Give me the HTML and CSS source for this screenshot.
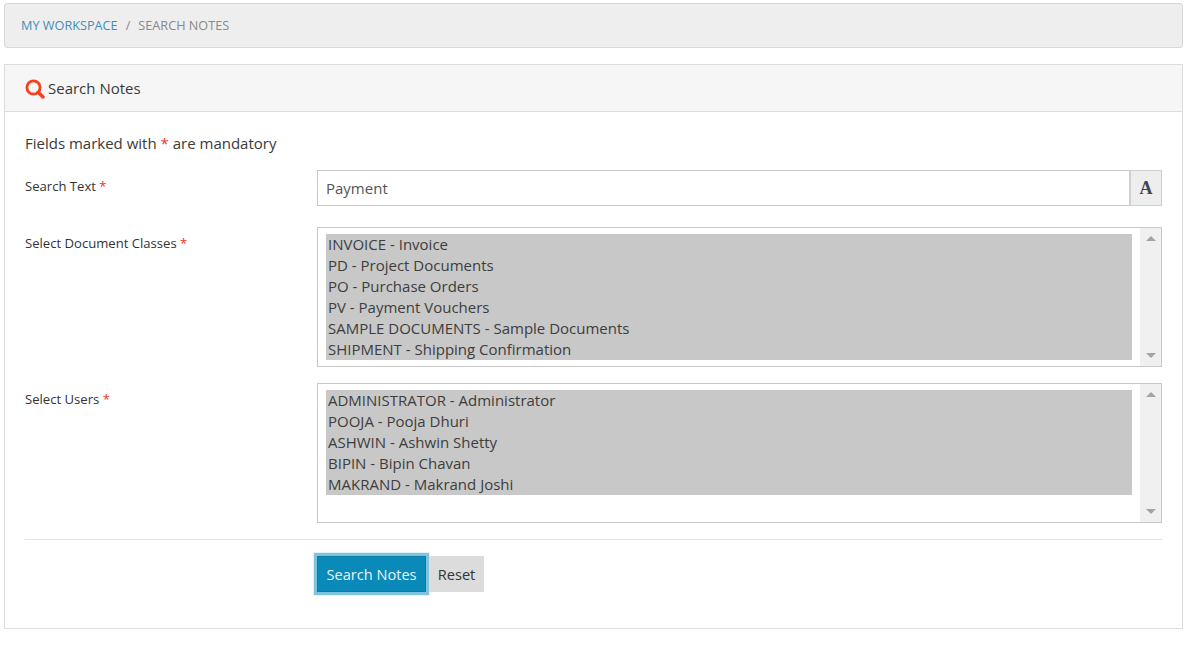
FILE: index.html
```html
<!DOCTYPE html>
<html lang="en">
<head>
<meta charset="utf-8">
<title>Search Notes</title>
<link rel="stylesheet" href="styles.css">
</head>
<body>
<nav class="crumbs"><a class="crumb-link">MY WORKSPACE</a><span class="crumb-sep">/</span><span class="crumb-cur">SEARCH NOTES</span></nav>
<section class="panel">
  <header class="panel-head">
    <svg class="head-icon" viewBox="0 0 20 20" width="20" height="20"><circle cx="8.5" cy="8.5" r="6.6" fill="none" stroke="#f0431f" stroke-width="2.8"/><path d="M13.2 13.2 L18 18" stroke="#f0431f" stroke-width="3.4" stroke-linecap="round"/></svg>
    <h1 class="panel-title">Search Notes</h1>
  </header>
  <div class="panel-body">
    <p class="note">Fields marked with <span class="req">*</span> are mandatory</p>
    <div class="row row-text">
      <label class="lbl">Search Text <span class="req">*</span></label>
      <div class="input-group">
        <div class="input">Payment</div>
        <div class="addon">A</div>
      </div>
    </div>
    <div class="row row-list">
      <label class="lbl">Select Document Classes <span class="req">*</span></label>
      <div class="listbox">
        <div class="opts">
          <div class="opt">INVOICE - Invoice</div>
          <div class="opt">PD - Project Documents</div>
          <div class="opt">PO - Purchase Orders</div>
          <div class="opt">PV - Payment Vouchers</div>
          <div class="opt">SAMPLE DOCUMENTS - Sample Documents</div>
          <div class="opt">SHIPMENT - Shipping Confirmation</div>
        </div>
        <div class="scroll"><span class="arrow up"></span><span class="arrow down"></span></div>
      </div>
    </div>
    <div class="row row-list">
      <label class="lbl">Select Users <span class="req">*</span></label>
      <div class="listbox">
        <div class="opts">
          <div class="opt">ADMINISTRATOR - Administrator</div>
          <div class="opt">POOJA - Pooja Dhuri</div>
          <div class="opt">ASHWIN - Ashwin Shetty</div>
          <div class="opt">BIPIN - Bipin Chavan</div>
          <div class="opt">MAKRAND - Makrand Joshi</div>
        </div>
        <div class="scroll"><span class="arrow up"></span><span class="arrow down"></span></div>
      </div>
    </div>
    <div class="actions">
      <button class="btn btn-primary">Search Notes</button>
      <button class="btn btn-reset">Reset</button>
    </div>
  </div>
</section>
</body>
</html>
```
FILE: styles.css
```css
* { box-sizing: border-box; }
html, body { margin: 0; padding: 0; }
body {
  background: #fff;
  font-family: "Open Sans", sans-serif;
  font-size: 15px;
  color: #3a3a3a;
  padding: 3px 5px 0 4px;
}
.crumbs {
  height: 45px;
  background: #eeeeee;
  border: 1px solid #d8d8d8;
  border-radius: 3px;
  display: flex;
  align-items: center;
  padding: 0 16px 2px;
  font-size: 12.7px;
}
.crumb-link { color: #3f8fb5; }
.crumb-sep { color: #8a8a8a; margin: 0 8px; }
.crumb-cur { color: #888; }
.panel {
  margin-top: 16px;
  height: 565px;
  border: 1px solid #dddddd;
}
.panel-head {
  height: 47px;
  background: #f6f6f6;
  border-bottom: 1px solid #dddddd;
  display: flex;
  align-items: center;
  padding-left: 20px;
  gap: 3px;
}
.head-icon { display: block; margin-top: 1px; }
.panel-title { margin: 0; font-size: 15px; font-weight: 400; color: #3a3a3a; }
.panel-body { padding: 20px 20px 0; }
.note { margin: 0; font-size: 15px; line-height: 22px; height: 38px; }
.req { color: #e8322c; }
.row { display: grid; grid-template-columns: 292px 1fr; }
.row-text { margin-bottom: 21px; }
.row-list { margin-bottom: 16px; }
.lbl { font-size: 13.1px; line-height: 18px; color: #333; padding-top: 7px; }
.input-group { display: flex; height: 36px; }
.input {
  flex: 1;
  border: 1px solid #c8c8c8;
  border-right: 0;
  background: #fff;
  padding: 0 8px;
  line-height: 35px;
  color: #555;
}
.addon {
  width: 33px;
  border: 1px solid #d0d0d0;
  border-left: 2px solid #d0d0d0;
  background: #eeeeee;
  font-family: "Liberation Serif", serif;
  font-weight: 700;
  font-size: 18px;
  color: #445;
  text-align: center;
  line-height: 35px;
}
.listbox {
  height: 140px;
  border: 1px solid #c8c8c8;
  display: flex;
  justify-content: space-between;
  background: #fff;
}
.opts { flex: 1; padding: 6px 8px 0 8px; }
.opt {
  height: 21px;
  line-height: 21px;
  background: #c8c8c8;
  color: #3d3d3d;
  padding-left: 2px;
  white-space: nowrap;
}
.scroll {
  width: 21px;
  background: #f0f0f0;
  display: flex;
  flex-direction: column;
  justify-content: space-between;
  align-items: center;
  padding: 8px 0;
}
.arrow { width: 0; height: 0; border-left: 5px solid transparent; border-right: 5px solid transparent; }
.arrow.up { border-bottom: 5px solid #a3a3a3; }
.arrow.down { border-top: 5px solid #a3a3a3; }
.actions {
  border-top: 1px solid #e3e3e3;
  padding: 16px 0 0 292px;
  display: flex;
  align-items: center;
}
.btn {
  font-family: inherit;
  font-size: 14.6px;
  height: 36px;
  border: 0;
  padding: 0;
}
.btn-primary {
  width: 109px;
  background: #0a8ab8;
  color: #e8f4fa;
  border: 1px solid #0a7ea6;
  box-shadow: 0 0 0 3px #7fc4dc, 0 0 0 4px #e2f2f8;
  margin-right: 3px;
}
.btn-reset { width: 55px; background: #dcdcdc; color: #333; }
```
